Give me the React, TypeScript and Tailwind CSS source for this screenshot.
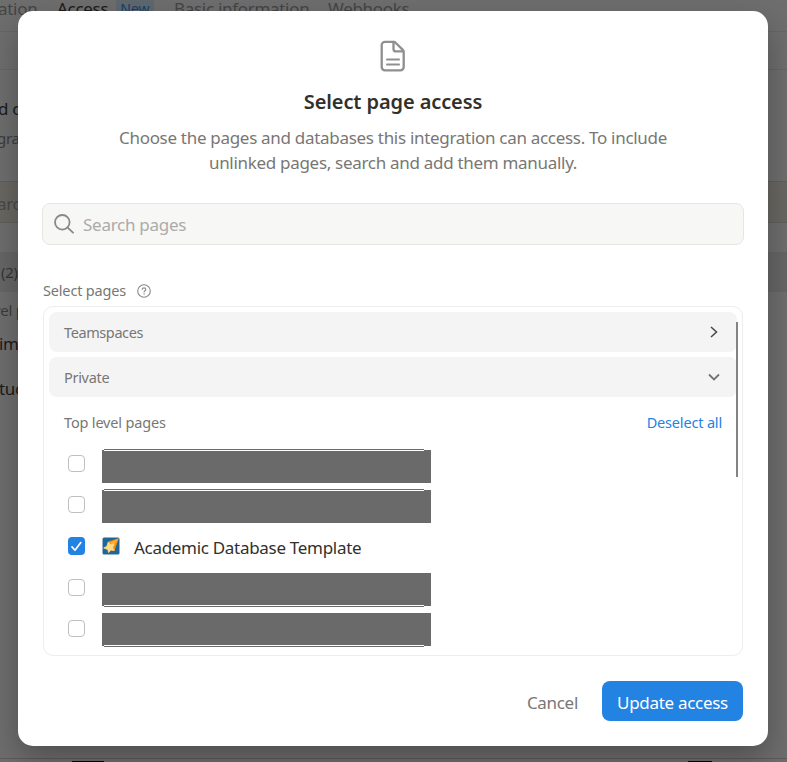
import React from "react";

function DocIcon() {
  return (
    <svg width="26" height="32" viewBox="0 0 26 32" fill="none" stroke="#918f8d" strokeWidth="2.3" strokeLinecap="round" strokeLinejoin="round">
      <path d="M5 1.800h8.600c.8 0 1.500.3 2 .9l7.200 7.200c.6.6.9 1.300.9 2.100V27a3.300 3.300 0 0 1-3.300 3.300H5A3.300 3.300 0 0 1 1.700 27V5.100A3.300 3.300 0 0 1 5 1.800Z" />
      <path d="M13.500 2v6.900a2.500 2.500 0 0 0 2.500 2.500h7" />
      <path d="M7 19.600h12M7 24.500h12" strokeWidth="2" />
    </svg>
  );
}

function SearchIcon() {
  return (
    <svg width="20" height="20" viewBox="0 0 20 20" fill="none" stroke="#8a8986" strokeWidth="1.8" strokeLinecap="round">
      <circle cx="8.300" cy="8.300" r="7.300" />
      <path d="M13.700 13.700 19 18.700" />
    </svg>
  );
}

function HelpIcon() {
  return (
    <svg width="14" height="14" viewBox="0 0 14 14" fill="none" stroke="#8a8986" strokeWidth="1.1" strokeLinecap="round">
      <circle cx="7" cy="7" r="6.300" />
      <path d="M5.200 5.500c.1-1 .8-1.600 1.800-1.600s1.800.6 1.800 1.500c0 1.300-1.700 1.300-1.700 2.500" />
      <path d="M7.100 10v.1" strokeWidth="1.400" />
    </svg>
  );
}

function StarIcon() {
  return (
    <svg width="18" height="18" viewBox="0 0 18 18">
      <rect x="0.500" y="0.500" width="17" height="17" rx="1.500" fill="#226699" />
      <path d="M16.800 1.200 6.500 4.500 9 9l3.500 4.500Z" fill="#f4900c" />
      <path d="M16.500 1.500 8.500 5.500l3 3Z" fill="#ffac33" />
      <path d="m6.300 4.900 2.200 2.500 3.700-.2-1.600 3.200 1.700 3.100-3.400-.4-2.300 2.500-.9-3.200-4-1.400 3.200-1.800Z" fill="#ffd983" stroke="#ffd983" strokeWidth="0.800" strokeLinejoin="round" />
    </svg>
  );
}

function Checkbox({ checked = false }: { checked?: boolean }) {
  if (!checked) return <span className="h-[17px] w-[17px] shrink-0 rounded-[4px] border border-[#c0bfbd] bg-white" />;
  return (
    <span className="mb-[2px] flex h-[18px] w-[17px] shrink-0 items-center justify-center rounded-[4px] bg-[#2383e2]">
      <svg width="11" height="11" viewBox="0 0 11 11" fill="none" stroke="#fff" strokeWidth="1.7" strokeLinecap="round" strokeLinejoin="round">
        <path d="M1 5.900 4 9.200 9.800 1.600" />
      </svg>
    </span>
  );
}

function HiddenTitle({ edge }: { edge: "top" | "bottom" }) {
  if (edge === "top") {
    return (
      <span className="block w-[329px]">
        <span className="ml-[2px] block h-px w-[320px] bg-[#6a6a6a]" />
        <span className="block h-[33px] bg-[#6a6a6a]">
          <span className="ml-[2px] block h-px w-[320px] bg-white" />
        </span>
      </span>
    );
  }
  return (
    <span className="block w-[329px]">
      <span className="flex h-[33px] items-end bg-[#6a6a6a]">
        <span className="ml-[2px] block h-px w-[320px] bg-white" />
      </span>
      <span className="ml-[2px] block h-px w-[320px] bg-[#6a6a6a]" />
    </span>
  );
}

function Side({ className, children }: { className: string; children: React.ReactNode }) {
  return <div className={"flex shrink-0 items-center whitespace-pre " + className}>{children}</div>;
}

function Backdrop() {
  return (
    <div className="flex h-full flex-col overflow-hidden bg-[#6e6e6e] text-[17px] tracking-[-0.3px] text-[#1b1b1a]">
      <div className="flex h-[32px] shrink-0 border-b border-[#666666] text-[#454545]">
        <div className="-mt-[3px] flex h-[24px] items-center whitespace-nowrap leading-6">
          <span className="w-[57px]"><span className="-ml-[2px]">ation</span></span>
          <span className="w-[59px] text-[#1b1b1a]">Access</span>
          <span className="flex h-[22px] w-[38px] items-center justify-center rounded bg-[#5f686f] text-[14px] tracking-normal text-[#173f66]">New</span>
          <span className="ml-[20px] w-[154px]">Basic information</span>
          <span>Webhooks</span>
        </div>
      </div>
      <div className="h-[38px] shrink-0 border-b border-[#666666]" />
      <Side className="mt-[27px] h-[24px]"><span className="-ml-[2px]">d c</span></Side>
      <Side className="mt-[5px] h-[24px] text-[15px] text-[#3c3c3b]"><span className="-ml-[3px]">gra</span></Side>
      <Side className="mt-[31px] h-[42px] border-y border-[#5f5e5a] bg-[#686762] pt-[3px] text-[#4a4946]"><span className="-ml-[3px]">arc</span></Side>
      <Side className="mt-[29px] h-[40px] bg-[#666666] pl-px text-[15px] text-[#353535]">(2)</Side>
      <Side className="mt-[6px] h-[24px] text-[15px] text-[#3c3c3b]"><span className="-ml-[7px]">vel p</span></Side>
      <Side className="mt-[10px] h-[24px]"><span className="-ml-[1px]">im</span></Side>
      <Side className="mt-[21px] h-[24px]"><span className="-ml-[1px]">tuc</span></Side>
      <div className="mt-auto h-[4px] shrink-0 border-t border-[#5c5c5c]">
        <div className="flex h-[3px] items-end">
          <span className="ml-[72px] h-px w-[32px] bg-black" />
          <span className="ml-[584px] h-px w-[24px] bg-black" />
        </div>
      </div>
    </div>
  );
}

export default function App() {
  return (
    <div className="relative h-[762px] w-[787px] overflow-hidden font-['Noto_Sans',sans-serif]">
      <Backdrop />
      <div className="absolute left-[18px] top-[11px] flex h-[735px] w-[750px] flex-col rounded-[15px] bg-white px-[24px] text-[#787774] shadow-[0_14px_32px_rgba(0,0,0,0.28)]">
        <div className="mt-[29px] flex h-[32px] justify-center"><DocIcon /></div>
        <h1 className="mt-[16px] text-center text-[20px] font-semibold leading-[28px] tracking-[-0.1px] text-[#32302c]">Select page access</h1>
        <p className="mt-[9px] text-center text-[17px] leading-[25px] tracking-[-0.3px]">
          Choose the pages and databases this integration can access. To include
          <br />
          unlinked pages, search and add them manually.
        </p>
        <div className="mt-[28px] flex h-[42px] shrink-0 items-center rounded-[8px] border border-[#e6e6e5] bg-[#f7f7f5] pl-[11px]">
          <SearchIcon />
          <span className="ml-[9px] pt-[2px] text-[17px] tracking-[-0.27px] text-[#acaba9]">Search pages</span>
        </div>
        <div className="mt-[34px] flex h-[24px] shrink-0 items-center pl-px text-[14.5px] tracking-[-0.17px]">
          <span className="w-[94px]">Select pages</span>
          <HelpIcon />
        </div>
        <div className="relative ml-px mt-[3px] h-[350px] w-[700px] shrink-0 rounded-[10px] border border-[#ededec] px-[5px] pt-[5px] text-[14.5px] tracking-[-0.17px]">
          <div className="flex h-[40px] items-center justify-between rounded-[8px] bg-[#f4f4f4] pl-[15px] pr-[19px]">
            <span className="pt-[2px] tracking-[-0.4px]">Teamspaces</span>
            <svg width="8" height="12" viewBox="0 0 8 12" fill="none" stroke="#484745" strokeWidth="1.500"><path d="m1 1 5.500 5L1 11" /></svg>
          </div>
          <div className="mt-[5px] flex h-[40px] items-center justify-between rounded-[8px] bg-[#f4f4f4] pl-[15px] pr-[17px]">
            <span className="pt-[2px] tracking-[-0.3px]">Private</span>
            <svg width="12" height="8" viewBox="0 0 12 8" fill="none" stroke="#747371" strokeWidth="1.800"><path d="m1 1.500 5 5 5-5" /></svg>
          </div>
          <div className="mt-[14px] flex h-[24px] items-center justify-between pl-[15px] pr-[15px]">
            <span>Top level pages</span>
            <span className="text-[#2383e2]">Deselect all</span>
          </div>
          <div className="flex flex-col pl-[19px]">
            <div className="mt-[14px] flex h-[34px] items-start gap-[17px]"><div className="flex pt-[6px]"><Checkbox /></div><HiddenTitle edge="top" /></div>
            <div className="mt-[6px] flex h-[34px] items-start gap-[17px]"><div className="flex pt-[7px]"><Checkbox /></div><HiddenTitle edge="top" /></div>
            <div className="mt-[6px] flex h-[36px] items-center"><Checkbox checked /><span className="mb-[2px] ml-[17px]"><StarIcon /></span><span className="ml-[14px] pt-[2px] text-[17px] tracking-[-0.3px] text-[#32302c]">Academic Database Template</span></div>
            <div className="mt-[8px] flex h-[34px] items-start gap-[17px]"><div className="flex pt-[6px]"><Checkbox /></div><HiddenTitle edge="bottom" /></div>
            <div className="mt-[6px] flex h-[34px] items-start gap-[17px]"><div className="flex pt-[7px]"><Checkbox /></div><HiddenTitle edge="bottom" /></div>
          </div>
          <span className="absolute right-[4px] top-[15px] h-[155px] w-[2px] bg-[#838383]" />
        </div>
        <div className="mr-[-1px] mt-[25px] flex h-[40px] shrink-0 items-center justify-end pr-[2px] text-[17px] tracking-[-0.3px]">
          <button className="mr-[24px] pt-[3px]">Cancel</button>
          <button className="h-[40px] w-[141px] rounded-[8px] bg-[#2383e2] pt-[3px] text-white">Update access</button>
        </div>
      </div>
    </div>
  );
}
